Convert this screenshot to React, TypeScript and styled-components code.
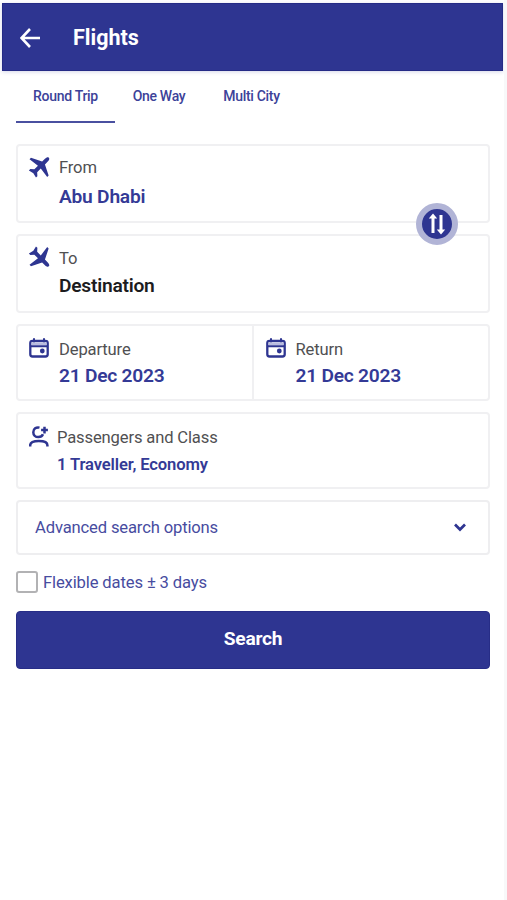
import React from "react";
import styled, { createGlobalStyle } from "styled-components";

const NAVY = "#2e3591";

const GlobalStyle = createGlobalStyle`
  * { box-sizing: border-box; }
  body { margin: 0; background: #f8f8f9; font-family: Roboto, "Liberation Sans", sans-serif; }
  button { font-family: inherit; border: 0; padding: 0; background: none; cursor: pointer; }
`;

const Screen = styled.main`
  width: 504px;
  height: 900px;
  padding: 3px 1px 0 2px;
  background: #fff;
  overflow: hidden;
`;

const Header = styled.header`
  display: flex;
  align-items: center;
  height: 68px;
  padding: 1px 0 0 17px;
  background: ${NAVY};
  color: #fff;
  border: 1px solid #252b86;
  box-shadow: 0 1px 4px rgba(46, 53, 145, 0.2);
`;

const Title = styled.h1`
  margin: 0 0 0 33px;
  font-size: 21.5px;
  line-height: 28px;
  font-weight: 700;
  letter-spacing: 0;
`;

const Tabs = styled.nav`
  display: flex;
  height: 52px;
  padding-left: 14px;
`;

const Tab = styled.button<{ $width: number; $active?: boolean }>`
  width: ${(p) => p.$width}px;
  height: 52px;
  padding-bottom: ${(p) => (p.$active ? 1 : 3)}px;
  border-bottom: ${(p) => (p.$active ? `2px solid #4a50a0` : "0")};
  color: #3c4299;
  font-size: 14px;
  font-weight: 500;
  letter-spacing: -0.3px;
`;

const Form = styled.form`
  display: flex;
  flex-direction: column;
  gap: 11px;
  padding: 21px 13px 0 14px;
`;

const Card = styled.section<{ $height: number }>`
  position: relative;
  display: flex;
  height: ${(p) => p.$height}px;
  border: 2px solid #f0f0f2;
  border-radius: 4px;
`;

const Field = styled.div<{ $top: number; $gap: number; $divided?: boolean }>`
  display: flex;
  flex: 1;
  gap: ${(p) => p.$gap}px;
  padding: ${(p) => p.$top}px 0 0 ${(p) => (p.$divided ? 12 : 11)}px;
  border-left: ${(p) => (p.$divided ? "2px solid #f0f0f2" : "0")};
  svg { flex: none; }
`;

const Label = styled.div`
  margin-top: 2px;
  color: #505052;
  font-size: 16.6px;
  line-height: 20px;
  letter-spacing: -0.15px;
`;

const Value = styled.div<{ $gap: number; $dark?: boolean; $small?: boolean }>`
  margin-top: ${(p) => p.$gap}px;
  color: ${(p) => (p.$dark ? "#1c1c1e" : "#343a96")};
  font-size: ${(p) => (p.$small ? 16.6 : 19.2)}px;
  line-height: 22px;
  font-weight: 600;
  letter-spacing: ${(p) => (p.$small ? -0.12 : -0.24)}px;
`;

const SwapButton = styled.button`
  position: absolute;
  right: 30px;
  bottom: -24px;
  z-index: 1;
  display: flex;
  align-items: center;
  justify-content: center;
  width: 42px;
  height: 42px;
  border: 6px solid #b1b4d6;
  border-radius: 50%;
  background: ${NAVY};
`;

const Advanced = styled.button`
  display: flex;
  align-items: center;
  justify-content: space-between;
  height: 55px;
  padding: 0 22px 1px 17px;
  border: 2px solid #eeeef0;
  border-radius: 4px;
  color: #474c9f;
  font-size: 16.6px;
  letter-spacing: -0.15px;
`;

const CheckRow = styled.label`
  display: flex;
  align-items: center;
  gap: 5px;
  height: 22px;
  margin-top: 5px;
  color: #474c9f;
  font-size: 16.6px;
  letter-spacing: -0.13px;
`;

const Checkbox = styled.input`
  appearance: none;
  width: 22px;
  height: 22px;
  margin: 0;
  border: 2px solid #b2b2b4;
  border-radius: 3px;
  background: #fff;
`;

const SearchButton = styled.button`
  height: 58px;
  margin-top: 7px;
  padding-bottom: 4px;
  border-radius: 4px;
  border: 1px solid #272d87;
  background: ${NAVY};
  color: #fff;
  font-size: 19.2px;
  font-weight: 700;
  letter-spacing: -0.25px;
`;

const BackIcon = () => (
  <svg width="20" height="20" viewBox="0 0 20 20" fill="none" stroke="#fff" strokeWidth="2.600">
    <path d="M20 10H2M10 1L1.500 10l8.500 9" />
  </svg>
);

const PlaneIcon = ({ angle }: { angle: number }) => (
  <svg width="22" height="22" viewBox="-11 -11 22 22" fill={NAVY} overflow="visible">
    <path
      transform={`translate(0 -.5) rotate(${angle})`}
      d="M0-12.500C-1.300-12.500-2-11-2-9v4L-12.500.3v2L-2 .9V6L-5 8.700v2L0 9.400l5 1.300v-2L2 6V.9l10.500 1.400v-2L2-5v-4C2-11 1.300-12.500 0-12.500z"
    />
  </svg>
);

const CalendarIcon = () => (
  <svg width="20" height="21" viewBox="0 0 20 21" fill="none">
    <rect x="1.300" y="2.900" width="17.400" height="15.600" rx="2.200" stroke={NAVY} strokeWidth="2.300" />
    <path d="M2.500 4.200h15v3h-15z" fill="#b9bcdf" />
    <path d="M2 8.300h16M5 .2v4M15 .2v4" stroke={NAVY} strokeWidth="2" />
    <circle cx="13.300" cy="13" r="2.400" fill={NAVY} />
  </svg>
);

const PassengerIcon = () => (
  <svg width="20" height="22" viewBox="0 0 20 22" fill="none" stroke={NAVY} strokeWidth="2.500">
    <path d="M10.500 1.600C7.200.8 4.300 2.900 4.300 6.200c0 3 2.200 4.900 5 4.900 2.200 0 4-1 4.700-2.800" />
    <path d="M15.500.7v6.800M12.100 4.100h6.800" />
    <path d="M1.200 20.500v-1.200c0-2.400 3.300-4.200 8.600-4.200s8.600 1.800 8.600 4.200v1.200" />
  </svg>
);

const SwapIcon = () => (
  <svg width="18" height="22" viewBox="0 0 18 22">
    <path d="M5 .5L.8 5.500h2.700V20h3V5.500h2.700zM13 21.500l4.200-5h-2.700V2h-3v14.500H8.800z" fill="#fff" />
  </svg>
);

const ChevronIcon = () => (
  <svg width="12" height="9" viewBox="0 0 12 9" fill="none">
    <path d="M1 1.500l5 5 5-5" stroke={NAVY} strokeWidth="2.700" />
  </svg>
);

export default function App() {
  return (
    <>
      <GlobalStyle />
      <Screen>
        <Header>
          <BackIcon />
          <Title>Flights</Title>
        </Header>
        <Tabs>
          <Tab $width={99} $active>Round Trip</Tab>
          <Tab $width={88}>One Way</Tab>
          <Tab $width={97}>Multi City</Tab>
        </Tabs>
        <Form onSubmit={(e) => e.preventDefault()}>
          <Card $height={79}>
            <Field $top={10} $gap={8}>
              <PlaneIcon angle={45} />
              <div>
                <Label>From</Label>
                <Value $gap={8}>Abu Dhabi</Value>
              </div>
            </Field>
            <SwapButton type="button" aria-label="Swap">
              <SwapIcon />
            </SwapButton>
          </Card>
          <Card $height={79}>
            <Field $top={11} $gap={8}>
              <PlaneIcon angle={135} />
              <div>
                <Label>To</Label>
                <Value $gap={6} $dark>Destination</Value>
              </div>
            </Field>
          </Card>
          <Card $height={77}>
            <Field $top={12} $gap={10}>
              <CalendarIcon />
              <div>
                <Label>Departure</Label>
                <Value $gap={5}>21 Dec 2023</Value>
              </div>
            </Field>
            <Field $top={12} $gap={10} $divided>
              <CalendarIcon />
              <div>
                <Label>Return</Label>
                <Value $gap={5}>21 Dec 2023</Value>
              </div>
            </Field>
          </Card>
          <Card $height={77}>
            <Field $top={12} $gap={8}>
              <PassengerIcon />
              <div>
                <Label>Passengers and Class</Label>
                <Value $gap={6} $small>1 Traveller, Economy</Value>
              </div>
            </Field>
          </Card>
          <Advanced type="button">
            Advanced search options
            <ChevronIcon />
          </Advanced>
          <CheckRow>
            <Checkbox type="checkbox" />
            Flexible dates ± 3 days
          </CheckRow>
          <SearchButton type="submit">Search</SearchButton>
        </Form>
      </Screen>
    </>
  );
}
